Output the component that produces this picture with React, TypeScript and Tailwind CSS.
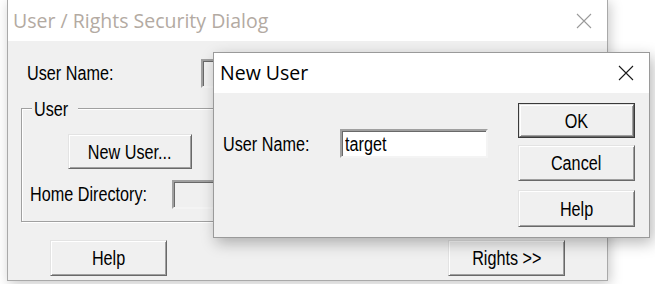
import React from 'react';

function Txt({ children, className = '' }: { children: React.ReactNode; className?: string }) {
  return (
    <span className={`inline-block whitespace-nowrap text-[20px] leading-none text-black scale-x-[0.81] ${className}`}>
      {children}
    </span>
  );
}

function Btn({ children, className = '' }: { children: React.ReactNode; className?: string }) {
  return (
    <div
      className={`flex items-center justify-center bg-[#f0f0f0] border border-t-[#e3e3e3] border-l-[#e3e3e3] border-r-[#696969] border-b-[#696969] shadow-[inset_1px_1px_0_#ffffff,inset_-1px_-1px_0_#a0a0a0] ${className}`}
    >
      <Txt className="origin-center">{children}</Txt>
    </div>
  );
}

function Field({ className = '', children }: { className?: string; children?: React.ReactNode }) {
  return (
    <div
      className={`flex items-center pl-[3px] border-2 border-t-[#a0a0a0] border-l-[#a0a0a0] border-r-[#f4f4f4] border-b-[#f4f4f4] shadow-[inset_1px_1px_0_#696969] ${className}`}
    >
      {children}
    </div>
  );
}

function CloseX({ color, size }: { color: string; size: number }) {
  return (
    <svg width={size} height={size} viewBox="0 0 16 16" fill="none">
      <path d="M1 1L15 15M15 1L1 15" stroke={color} strokeWidth="1.1" />
    </svg>
  );
}

export default function App() {
  return (
    <div className="relative w-[655px] h-[284px] overflow-hidden bg-white font-['Liberation_Sans',Arial,sans-serif]">
      {/* background dialog */}
      <div className="absolute left-[7px] top-[-1px] w-[601px] h-[282px] flex flex-col border border-[#a9a9a9] bg-[#f0f0f0] shadow-[2px_3px_12px_rgba(0,0,0,0.22)]">
        <div className="flex h-[41px] shrink-0 items-center justify-between bg-white pl-[5px] pr-[15px] pt-[1px]">
          <span className="font-['Open_Sans',sans-serif] text-[19.5px] text-[#b3aaa2]">User / Rights Security Dialog</span>
          <CloseX color="#9a9a9a" size={16} />
        </div>
        <div className="flex flex-col pt-[18px]">
          <div className="flex h-[29px] items-center pl-[19px]">
            <div className="w-[174px] pt-[3px]">
              <Txt className="origin-left">User Name:</Txt>
            </div>
            <Field className="h-[29px] w-[300px] bg-[#f0f0f0]" />
          </div>

          <div className="relative ml-[13px] mt-[20px] flex h-[114px] w-[520px] flex-col border border-[#a0a0a0] shadow-[inset_1px_1px_0_#ffffff,1px_1px_0_#ffffff]">
            <span className="absolute left-[10px] top-[-10px] bg-[#f0f0f0] px-[2px]">
              <Txt className="origin-left">User</Txt>
            </span>
            <Btn className="ml-[46px] mt-[25px] h-[35px] w-[124px]">New User...</Btn>
            <div className="ml-[8px] mt-[11px] flex h-[28px] items-center">
              <div className="w-[142px] pt-[4px]">
                <Txt className="origin-left">Home Directory:</Txt>
              </div>
              <Field className="h-[29px] w-[300px] bg-[#f0f0f0]" />
            </div>
          </div>

          <div className="mt-[18px] flex pl-[42px]">
            <Btn className="h-[36px] w-[117px]">Help</Btn>
            <Btn className="ml-[281px] h-[36px] w-[117px]">Rights &gt;&gt;</Btn>
          </div>
        </div>
      </div>

      {/* new user dialog */}
      <div className="absolute left-[213px] top-[52px] w-[437px] h-[186px] flex flex-col border border-[#9a9a9a] bg-[#f0f0f0] shadow-[3px_5px_14px_rgba(0,0,0,0.28)]">
        <div className="flex h-[40px] shrink-0 items-center justify-between bg-white pl-[6px] pr-[15px]">
          <span className="font-['Open_Sans',sans-serif] text-[19.5px] text-black">New User</span>
          <CloseX color="#1a1a1a" size={16} />
        </div>
        <div className="flex flex-1">
          <div className="flex h-fit items-center pl-[9px] pt-[36px]">
            <div className="w-[117px] pt-[4px]">
              <Txt className="origin-left">User Name:</Txt>
            </div>
            <Field className="h-[29px] w-[148px] bg-white">
              <Txt className="origin-left">target</Txt>
            </Field>
          </div>
          <div className="ml-auto flex flex-col pr-[14px] pt-[10px]">
            <div className="border border-[#3a3a3a]">
              <Btn className="h-[33px] w-[115px]">OK</Btn>
            </div>
            <Btn className="mt-[7px] h-[36px] w-[117px]">Cancel</Btn>
            <Btn className="mt-[9px] h-[37px] w-[117px]">Help</Btn>
          </div>
        </div>
      </div>
    </div>
  );
}
